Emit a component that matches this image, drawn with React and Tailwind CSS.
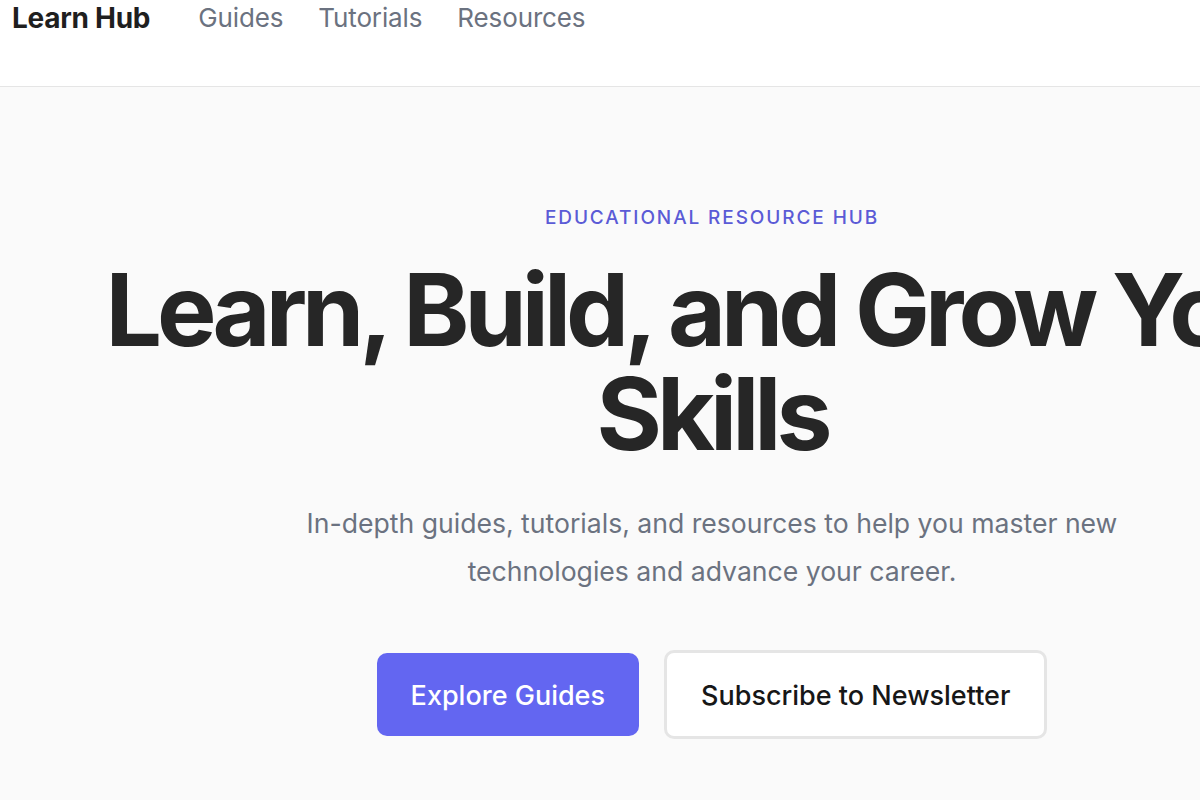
export default function App() {
  const links = ["Guides", "Tutorials", "Resources"];

  return (
    <div className="w-[1200px] h-[800px] overflow-hidden bg-[#fafafa] font-['Inter',sans-serif]">
      <div className="w-[1424px]">
        <nav className="h-[87px] bg-white border-b border-[#e5e5e5] flex items-start pt-[2px] pl-[12px]">
          <a href="#" className="text-[28px] leading-[32px] font-bold text-[#1f1f1f] tracking-[-0.01em]">
            Learn Hub
          </a>
          <div className="flex gap-[35px] ml-[48px]">
            {links.map((l) => (
              <a key={l} href="#" className="text-[26px] leading-[32px] text-[#6b7280] tracking-[-0.005em]">
                {l}
              </a>
            ))}
          </div>
        </nav>

        <section className="flex flex-col items-center pt-[117px] text-center">
          <p className="text-[19px] leading-[28px] font-medium tracking-[0.1em] text-[#5b5bd6]">
            EDUCATIONAL RESOURCE HUB
          </p>
          <h1 className="mt-[26px] text-[100px] leading-[104px] font-bold tracking-[-0.05em] text-[#262626] max-w-[1300px]">
            Learn, Build, and Grow Your Skills
          </h1>
          <p className="mt-[33px] max-w-[880px] text-[26.6px] leading-[48px] text-[#6b7280]">
            In-depth guides, tutorials, and resources to help you master new technologies and advance your career.
          </p>
          <div className="mt-[55px] flex items-center gap-[25px]">
            <button className="h-[83px] pt-[3px] px-[34px] rounded-[10px] bg-[#6366f1] text-white text-[27px] font-medium">
              Explore Guides
            </button>
            <button className="h-[89px] pt-[3px] px-[34px] rounded-[10px] bg-white border-[3px] border-[#e5e5e5] text-[#171717] text-[27px] font-medium">
              Subscribe to Newsletter
            </button>
          </div>
        </section>
      </div>
    </div>
  );
}
